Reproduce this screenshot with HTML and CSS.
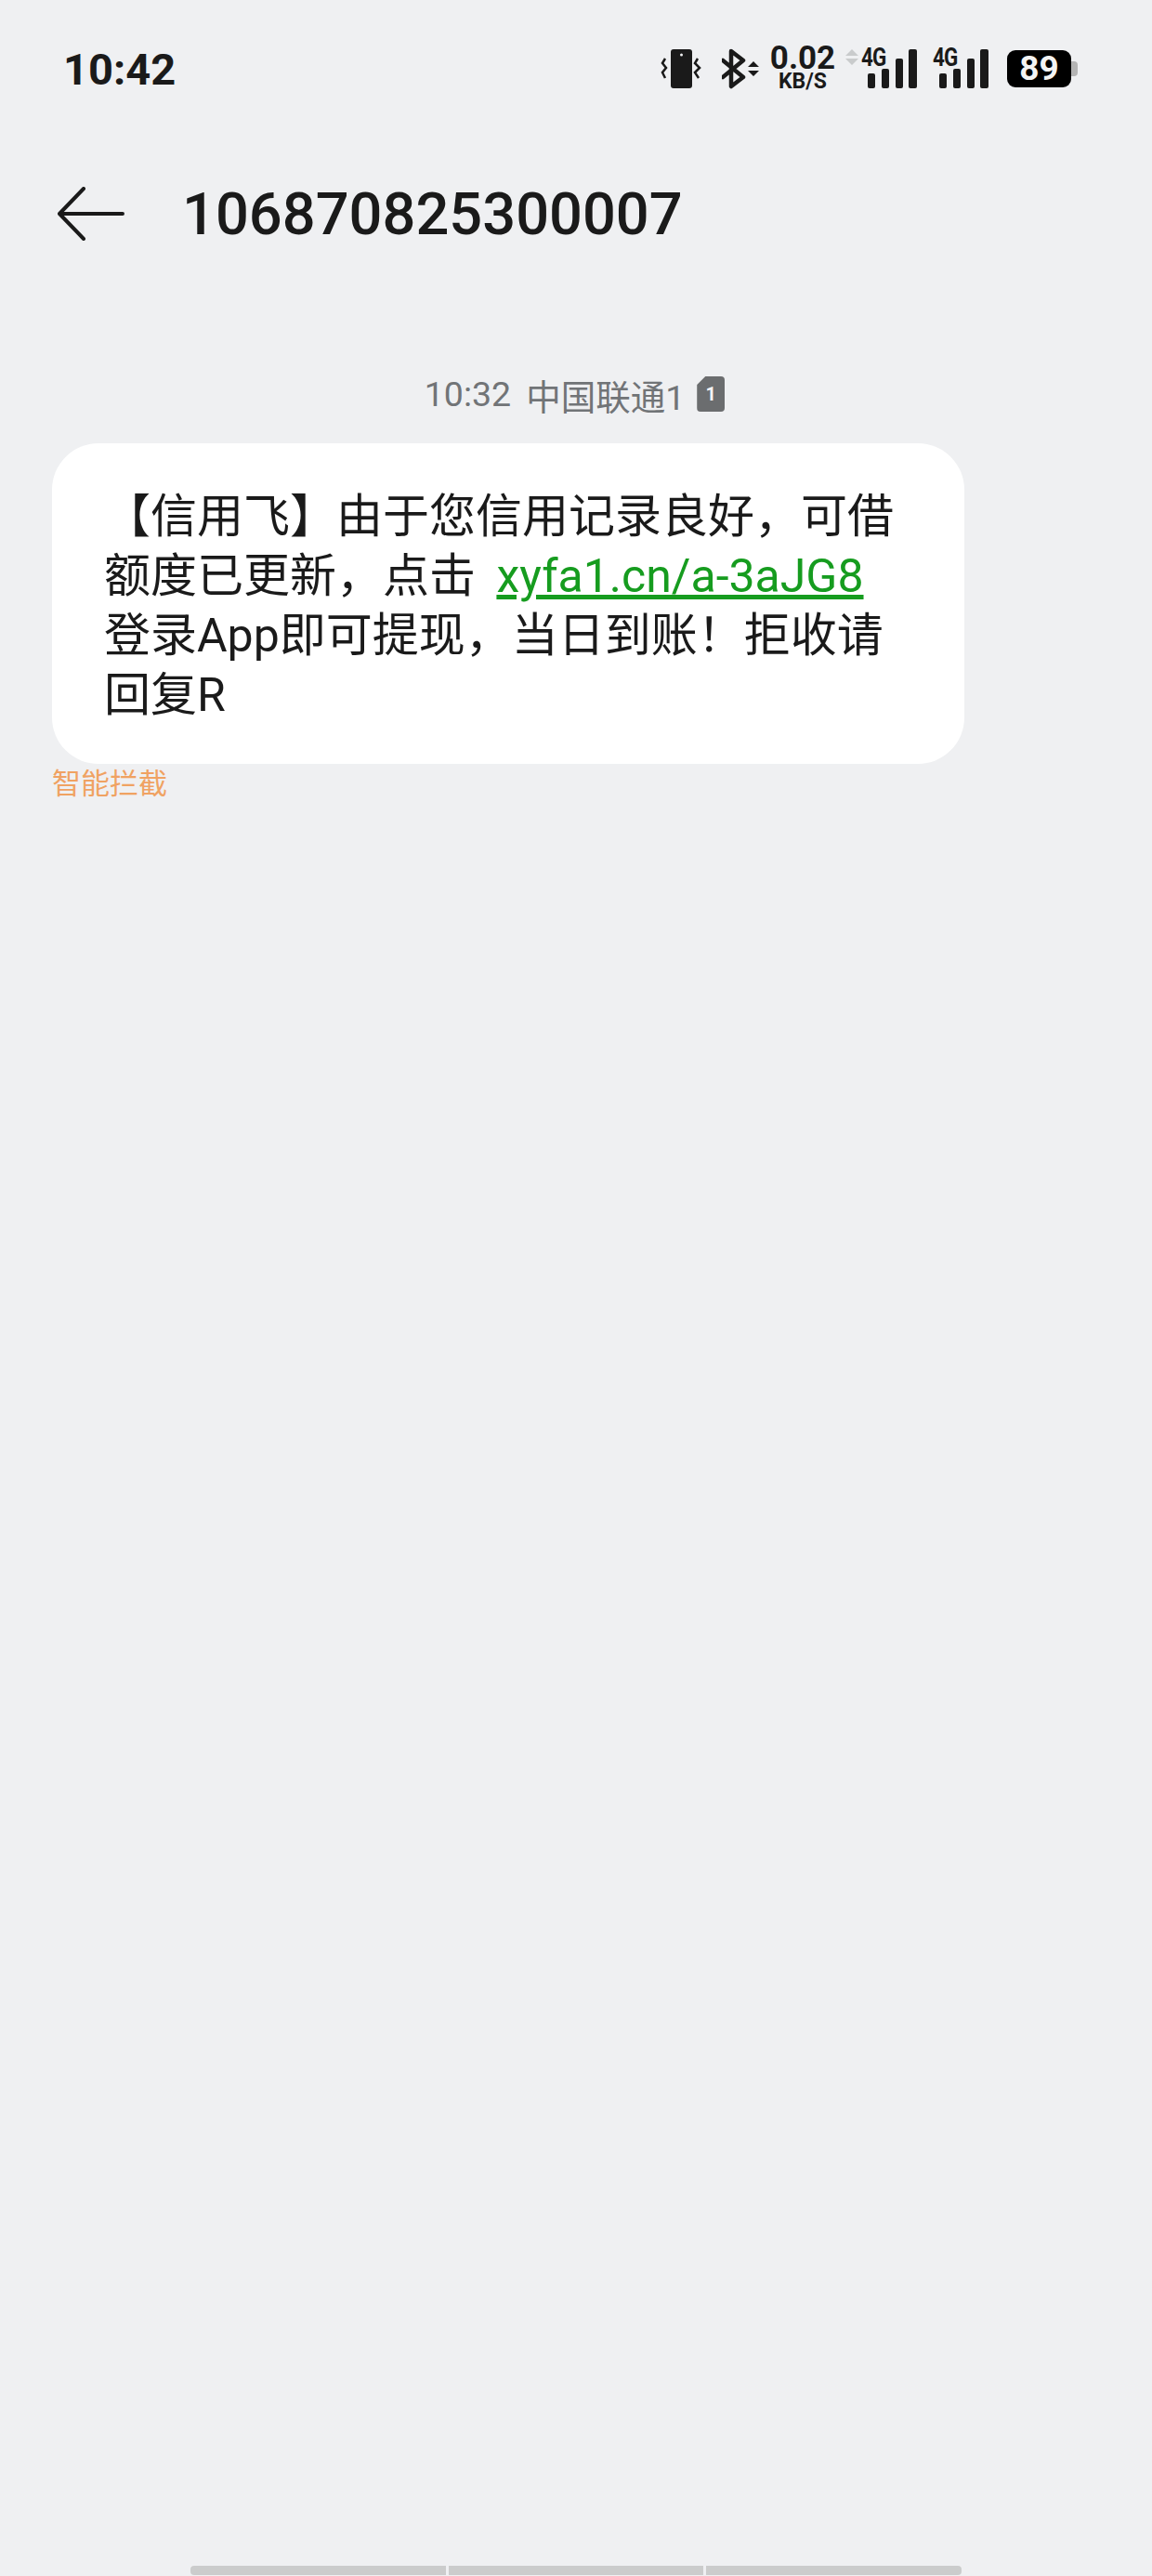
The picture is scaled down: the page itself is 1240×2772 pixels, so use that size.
FILE: index.html
```html
<!DOCTYPE html>
<html lang="zh-CN">
<head>
    <meta charset="UTF-8">
    <meta name="viewport" content="width=device-width, initial-scale=1.0">
    <title>106870825300007</title>
    <link rel="stylesheet" href="styles.css">
</head>
<body>

    <!-- Status bar -->
    <header class="status">
        <span class="clock">10:42</span>
        <div class="status-icons">
            <svg class="icon-vibrate" width="44" height="44" viewBox="0 0 44 44">
                <rect x="11" y="1" width="23" height="42" rx="3" fill="#1a1a1a"/>
                <circle cx="22.5" cy="7" r="1.5" fill="#eff0f2"/>
                <path d="M5 11 L2 16 L6 21 L2 26 L5 32 M40 11 L37 16 L42 21 L37 26 L41 32" fill="none" stroke="#1a1a1a" stroke-width="2.5"/>
            </svg>
            <svg class="icon-bluetooth" width="42" height="44" viewBox="0 0 42 44">
                <path d="M1 13 L23 31 L10 41 L10 3 L23 13 L1 31" fill="none" stroke="#1a1a1a" stroke-width="4.5" stroke-linejoin="round" stroke-linecap="round"/>
                <path d="M28 20 L34 14 L40 20 Z M28 24 L40 24 L34 30 Z" fill="#1a1a1a"/>
            </svg>
            <div class="speed">
                <span class="speed-value">0.02</span>
                <span class="speed-unit">KB/S</span>
            </div>
            <svg class="icon-updown" width="16" height="44" viewBox="0 0 16 44">
                <path d="M1 8 L8 1 L15 8 Z M1 11 L15 11 L8 18 Z" fill="#c9cbcc"/>
            </svg>
            <div class="signal">
                <span class="signal-label">4G</span>
                <svg width="61" height="44" viewBox="0 0 61 44">
                    <rect x="7" y="27" width="8" height="16" rx="2" fill="#1a1a1a"/>
                    <rect x="22" y="22" width="8" height="21" rx="2" fill="#1a1a1a"/>
                    <rect x="37" y="11" width="8" height="32" rx="2" fill="#1a1a1a"/>
                    <rect x="51" y="1" width="9" height="42" rx="2" fill="#1a1a1a"/>
                </svg>
            </div>
            <div class="signal">
                <span class="signal-label">4G</span>
                <svg width="61" height="44" viewBox="0 0 61 44">
                    <rect x="7" y="27" width="8" height="16" rx="2" fill="#1a1a1a"/>
                    <rect x="22" y="22" width="8" height="21" rx="2" fill="#1a1a1a"/>
                    <rect x="37" y="11" width="8" height="32" rx="2" fill="#1a1a1a"/>
                    <rect x="51" y="1" width="9" height="42" rx="2" fill="#1a1a1a"/>
                </svg>
            </div>
            <div class="battery">
                <span class="battery-level">89</span>
                <span class="battery-nub"></span>
            </div>
        </div>
    </header>

    <!-- Conversation title -->
    <nav class="topbar">
        <svg class="back" width="72" height="58" viewBox="0 0 72 58">
            <path d="M28 2 L2 29 L28 56 M3 29 L70 29" fill="none" stroke="#1a1a1a" stroke-width="4" stroke-linecap="round" stroke-linejoin="round"/>
        </svg>
        <h1 class="title">106870825300007</h1>
    </nav>

    <main class="thread">
        <div class="meta">
            <span>10:32</span>
            <span>中国联通1</span>
            <span class="sim">1</span>
        </div>
        <div class="bubble">
            【信用飞】由于您信用记录良好，可借<br>
            额度已更新，点击 <a href="#" class="link">xyfa1.cn/a-3aJG8</a><br>
            登录App即可提现，当日到账！拒收请<br>
            回复R
        </div>
        <div class="flag">智能拦截</div>
    </main>

    <!-- Gesture bar -->
    <footer class="gesture">
        <span class="gesture-part"></span>
        <span class="gesture-part"></span>
        <span class="gesture-part"></span>
    </footer>

</body>
</html>
```

FILE: styles.css
```css
body {
    font-family: Roboto, "Noto Sans CJK SC", sans-serif;
    background-color: #eff0f2;
    color: #1a1a1a;
    margin: 0;
    height: 2772px;
    display: flex;
    flex-direction: column;
    overflow: hidden;
}

.status {
    display: flex;
    justify-content: space-between;
    align-items: center;
    height: 74px;
    margin-top: 37px;
    padding: 0 80px 0 68px;
}

.clock {
    font-size: 47px;
    font-weight: 700;
}

.status-icons {
    display: flex;
    align-items: center;
}

.icon-vibrate {
    margin-right: 22px;
}

.icon-bluetooth {
    margin-right: 9px;
}

.speed {
    display: flex;
    flex-direction: column;
    align-items: center;
    width: 72px;
    margin-right: 9px;
    font-weight: 700;
}

.speed-value {
    font-size: 35px;
    line-height: 26px;
}

.speed-unit {
    margin-top: 2px;
    font-size: 23px;
    line-height: 20px;
}

.icon-updown {
    margin-right: 2px;
}

.signal {
    position: relative;
    margin-right: 16px;
}

.signal + .signal {
    margin-right: 19px;
}

.signal svg {
    display: block;
}

.signal-label {
    position: absolute;
    top: -3px;
    left: 0;
    font-size: 28px;
    line-height: 26px;
    font-weight: 700;
    letter-spacing: -1px;
    transform: scaleX(0.8);
    transform-origin: left center;
}

.battery {
    display: flex;
    align-items: center;
}

.battery-level {
    width: 69px;
    height: 40px;
    line-height: 40px;
    text-align: center;
    background-color: #000;
    border-radius: 9px;
    color: #f4f4f4;
    font-size: 37px;
    font-weight: 700;
}

.battery-nub {
    width: 7px;
    height: 16px;
    background-color: #b4b4b4;
    border-radius: 0 4px 4px 0;
}

.topbar {
    display: flex;
    align-items: center;
    height: 100px;
    margin-top: 69px;
    padding-left: 62px;
}

.title {
    margin: 0 0 0 62px;
    font-size: 63.2px;
    font-weight: 500;
}

.thread {
    flex: 1;
    padding-top: 119px;
}

.meta {
    display: flex;
    justify-content: center;
    align-items: center;
    gap: 16px;
    height: 50px;
    padding-right: 3px;
    font-size: 37.5px;
    color: #717477;
}

.sim {
    width: 30px;
    height: 38px;
    margin-left: -3px;
    line-height: 38px;
    text-align: center;
    background-color: #6b6d6f;
    clip-path: polygon(9px 0, 100% 0, 100% 100%, 0 100%, 0 9px);
    border-radius: 4px;
    color: #f4f4f4;
    font-size: 20px;
    font-weight: 700;
}

.bubble {
    width: 870px;
    margin: 28px 0 0 56px;
    padding: 47px 56px 42px;
    background-color: #fff;
    border-radius: 50px;
    font-size: 50px;
    line-height: 64px;
}

.link {
    margin-left: 10px;
    color: #169c1f;
}

.flag {
    margin: 1px 0 0 56px;
    font-size: 31px;
    line-height: 42px;
    color: #f0a262;
}

.gesture {
    display: flex;
    gap: 3px;
    margin: 0 205px 1px;
}

.gesture-part {
    flex: 1;
    height: 10px;
    background-color: #cbcccc;
}

.gesture-part:first-child {
    border-radius: 4px 0 0 4px;
}

.gesture-part:last-child {
    border-radius: 0 4px 4px 0;
}
```
